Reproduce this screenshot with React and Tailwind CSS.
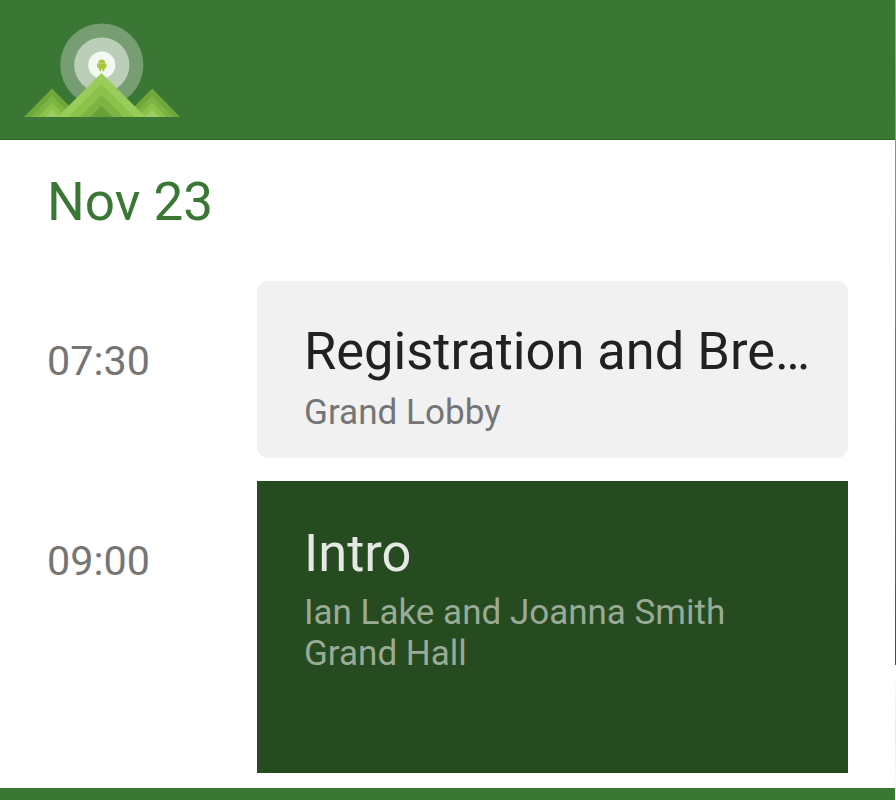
const AndroidBot = () => (
  <g fill="#a4c639">
    <path d="M98.3 63.4a3.5 4 0 0 1 7 0z" />
    <path d="M98.3 63.4h7v4.9a.9.9 0 0 1-.9.9h-5.2a.9.9 0 0 1-.9-.9z" />
    <rect x="97" y="63.4" width="1.3" height="4" rx=".6" />
    <rect x="105.3" y="63.4" width="1.3" height="4" rx=".6" />
    <rect x="99.4" y="68" width="1.7" height="3.2" rx=".7" />
    <rect x="102.5" y="68" width="1.7" height="3.2" rx=".7" />
  </g>
);

const Logo = () => (
  <svg className="block h-[140px] w-[204px]" viewBox="0 0 204 140">
    <circle cx="101.8" cy="65" r="41.6" fill="#769e72" />
    <circle cx="101.8" cy="65" r="27.6" fill="#baceb8" />
    <circle cx="101.8" cy="65" r="13.6" fill="#f4f8f4" />
    <AndroidBot />
    <path d="M24 117 52 88.5 80 117z" fill="#6fa83a" />
    <path d="M31 117 52 95.5 73 117z" fill="#7cb342" />
    <path d="M38 117 52 102.5 66 117z" fill="#8bc34a" />
    <path d="M45 117 52 109.5 59 117z" fill="#9ccc65" />
    <path d="M124 117 152.2 88.5 180 117z" fill="#6fa83a" />
    <path d="M131 117 152.2 95.5 173 117z" fill="#7cb342" />
    <path d="M138 117 152.2 102.5 166 117z" fill="#8bc34a" />
    <path d="M145 117 152.2 109.5 159 117z" fill="#9ccc65" />
    <path d="M57.5 117 101.5 73 145.5 117z" fill="#98cd5c" />
    <path d="M68.5 117 101.5 84 134.5 117z" fill="#8bc34a" />
    <path d="M79.5 117 101.5 95 123.5 117z" fill="#7cb342" />
    <path d="M90.5 117 101.5 106 112.5 117z" fill="#689f38" />
  </svg>
);

const Session = ({ time, children }) => (
  <div className="flex">
    <div className="w-[210px] shrink-0 pt-14 text-[41.3px] leading-[48px] text-[#757575]">{time}</div>
    {children}
  </div>
);

export default function App() {
  return (
    <div className="flex h-[800px] w-[896px] overflow-hidden bg-white font-[Roboto,sans-serif]">
      <div className="flex w-[895px] shrink-0 flex-col">
        <header className="h-[140px] shrink-0 border-b border-[#2d6a27] bg-[#3a7634]">
          <Logo />
        </header>
        <main className="flex h-[648px] shrink-0 flex-col pl-[47px]">
          <h1 className="mt-[31px] h-[110px] text-[53px] leading-[62px] text-[#3a7634]">Nov 23</h1>
          <div className="flex flex-col gap-[23px]">
            <Session time="07:30">
              <section className="h-[177px] w-[591px] rounded-[11px] bg-[#f1f1f1] pt-[39px] pl-[47px]">
                <h2 className="text-[52.4px] leading-[62px] whitespace-nowrap text-[#212121]">Registration and Bre…</h2>
                <p className="mt-2.5 text-[35.1px] leading-[41px] text-[#757575]">Grand Lobby</p>
              </section>
            </Session>
            <Session time="09:00">
              <section className="h-[292px] w-[591px] bg-[#264b20] pt-[41px] pl-[47px]">
                <h2 className="text-[52.4px] leading-[62px] text-[#e4e9e3]">Intro</h2>
                <p className="mt-2 text-[35px] leading-[41px] text-[#99aa96]">Ian Lake and Joanna Smith</p>
                <p className="text-[35px] leading-[41px] text-[#99aa96]">Grand Hall</p>
              </section>
            </Session>
          </div>
        </main>
        <footer className="h-3 shrink-0 bg-[#3a7634]" />
      </div>
      <div className="flex w-px flex-col">
        <div className="h-[665px] bg-linear-to-b from-[#c99b62] via-[#976b68] to-[#4d4d40]" />
        <div className="h-[135px] bg-linear-to-b from-white via-[#f0e6e8] to-white" />
      </div>
    </div>
  );
}
